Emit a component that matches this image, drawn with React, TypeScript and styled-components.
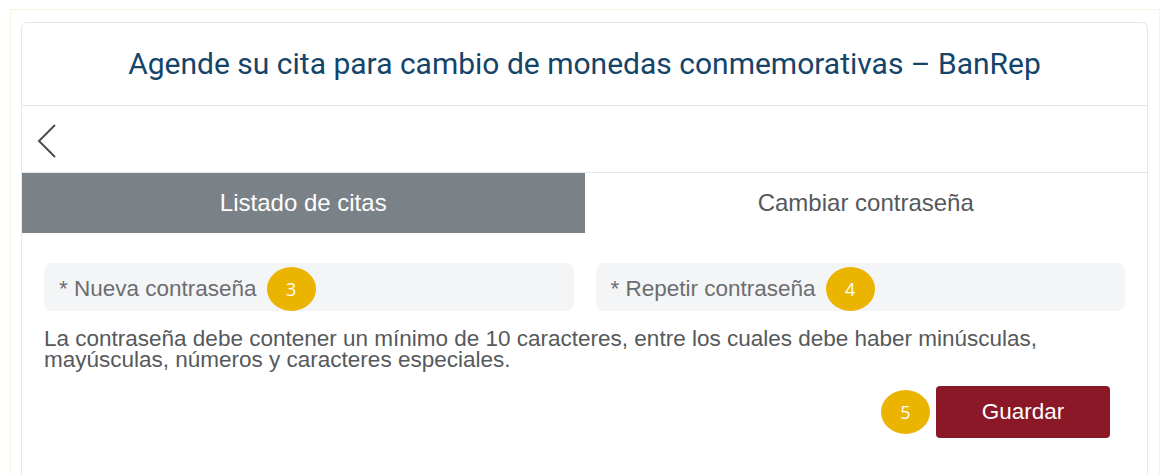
import React from 'react'
import styled, { createGlobalStyle } from 'styled-components'

const GlobalStyle = createGlobalStyle`
  html, body {
    margin: 0;
    padding: 0;
    background: #ffffff;
  }
  body {
    font-family: "Liberation Sans", Arial, sans-serif;
    overflow: hidden;
  }
`

const Frame = styled('div')`
  margin: 9px 9px 0 10px;
  padding: 12px 11px 0 10px;
  border: 1px solid #fbf2e4;
  border-bottom: none;
  height: 470px;
  box-sizing: border-box;
`

const Card = styled('div')`
  border: 1px solid #e0e9ec;
  border-bottom: none;
  border-radius: 6px 6px 0 0;
  height: 460px;
  box-sizing: border-box;
`

const Header = styled('div')`
  height: 82px;
  display: flex;
  align-items: center;
  justify-content: center;
  border-bottom: 1px solid #e0e9ec;
`

const Title = styled('h1')`
  margin: 0 0 2px;
  font-family: Roboto, "Liberation Sans", sans-serif;
  font-weight: 400;
  font-size: 30px;
  color: #144469;
`

const BackRow = styled('div')`
  height: 67px;
  display: flex;
  align-items: center;
  padding: 3px 0 0 14px;
  box-sizing: border-box;
  border-bottom: 1px solid #e0e9ec;
`

const BackButton = styled('button')`
  border: none;
  background: none;
  padding: 0;
  display: flex;
  cursor: pointer;
`

const Tabs = styled('div')`
  display: grid;
  grid-template-columns: 1fr 1fr;
  height: 60px;
`

const Tab = styled('div')<{ $active?: boolean }>`
  display: flex;
  align-items: center;
  justify-content: center;
  font-size: 24px;
  background: ${(p) => (p.$active ? '#7b8287' : '#ffffff')};
  color: ${(p) => (p.$active ? '#ffffff' : '#55595c')};
`

const Form = styled('div')`
  padding: 30px 22px 0;
`

const Fields = styled('div')`
  display: grid;
  grid-template-columns: 1fr 1fr;
  gap: 22px;
`

const Field = styled('div')`
  height: 48px;
  display: flex;
  align-items: center;
  gap: 10px;
  padding: 3px 15px 0;
  box-sizing: border-box;
  background: #f4f5f6;
  border-radius: 8px;
  font-size: 22.5px;
  color: #6b6e71;
`

const Badge = styled('span')`
  flex-shrink: 0;
  width: 49px;
  height: 44px;
  border-radius: 50%;
  background: #ebb400;
  color: #ffffff;
  display: flex;
  align-items: center;
  justify-content: center;
  font-family: "Open Sans", sans-serif;
  font-size: 18px;
`

const Help = styled('p')`
  margin: 17px 0 0;
  font-size: 22.5px;
  line-height: 21px;
  color: #56595c;
`

const Actions = styled('div')`
  display: flex;
  justify-content: flex-end;
  align-items: center;
  gap: 6px;
  margin-top: 16px;
  padding-right: 15px;
`

const SaveButton = styled('button')`
  width: 174px;
  height: 52px;
  border: none;
  border-radius: 4px;
  background: #8b1826;
  color: #ffffff;
  font-family: "Liberation Sans", Arial, sans-serif;
  font-size: 22.5px;
  cursor: pointer;
`

const App = (): JSX.Element => {
  return (
    <>
      <GlobalStyle />
      <Frame>
        <Card>
          <Header>
            <Title>Agende su cita para cambio de monedas conmemorativas – BanRep</Title>
          </Header>
          <BackRow>
            <BackButton aria-label="Volver">
              <svg width="22" height="36" viewBox="0 0 22 36" fill="none">
                <path d="M19 2 L3 18 L19 34" stroke="#4a4d50" strokeWidth="2" />
              </svg>
            </BackButton>
          </BackRow>
          <Tabs>
            <Tab $active>Listado de citas</Tab>
            <Tab>Cambiar contraseña</Tab>
          </Tabs>
          <Form>
            <Fields>
              <Field>
                <span>* Nueva contraseña</span>
                <Badge>3</Badge>
              </Field>
              <Field>
                <span>* Repetir contraseña</span>
                <Badge>4</Badge>
              </Field>
            </Fields>
            <Help>
              La contraseña debe contener un mínimo de 10 caracteres, entre los cuales debe haber minúsculas,
              mayúsculas, números y caracteres especiales.
            </Help>
            <Actions>
              <Badge>5</Badge>
              <SaveButton>Guardar</SaveButton>
            </Actions>
          </Form>
        </Card>
      </Frame>
    </>
  )
}

export default App
